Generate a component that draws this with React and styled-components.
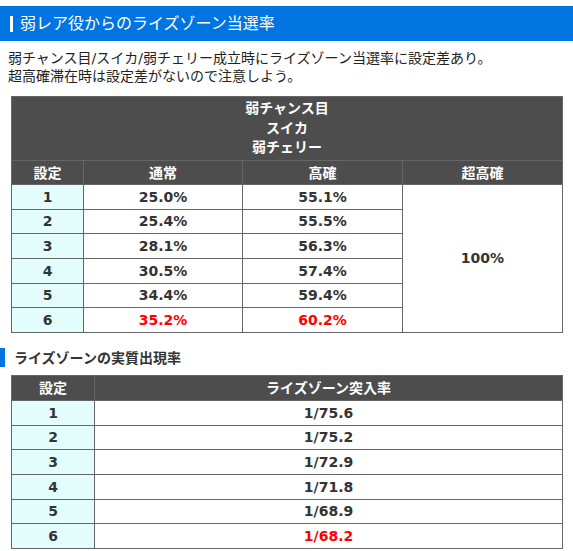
import React from 'react';
import styled, { createGlobalStyle } from "styled-components";

const GlobalStyle = createGlobalStyle`
    body {
        margin: 0;
        background: #fff;
        font-family: "DejaVu Sans", "Noto Sans CJK JP", sans-serif;
        color: #333;
    }
`;

const rareRows = [
    { set: "1", normal: "25.0%", high: "55.1%" },
    { set: "2", normal: "25.4%", high: "55.5%" },
    { set: "3", normal: "28.1%", high: "56.3%" },
    { set: "4", normal: "30.5%", high: "57.4%" },
    { set: "5", normal: "34.4%", high: "59.4%" },
    { set: "6", normal: "35.2%", high: "60.2%", hot: true },
];

const zoneRows = [
    { set: "1", rate: "1/75.6" },
    { set: "2", rate: "1/75.2" },
    { set: "3", rate: "1/72.9" },
    { set: "4", rate: "1/71.8" },
    { set: "5", rate: "1/68.9" },
    { set: "6", rate: "1/68.2", hot: true },
];

function App() {
    return (
        <Page>
            <GlobalStyle />
            <TitleBar>
                <TitleMark />
                <Title>弱レア役からのライズゾーン当選率</Title>
            </TitleBar>

            <Lead>
                弱チャンス目/スイカ/弱チェリー成立時にライズゾーン当選率に設定差あり。<br />
                超高確滞在時は設定差がないので注意しよう。
            </Lead>

            <Table>
                <colgroup>
                    <col style={{ width: 72 }} />
                    <col style={{ width: 159 }} />
                    <col style={{ width: 160 }} />
                    <col />
                </colgroup>
                <thead>
                    <tr>
                        <Th colSpan={4} $tall>
                            弱チャンス目<br />スイカ<br />弱チェリー
                        </Th>
                    </tr>
                    <tr>
                        <Th>設定</Th>
                        <Th>通常</Th>
                        <Th>高確</Th>
                        <Th>超高確</Th>
                    </tr>
                </thead>
                <tbody>
                    {rareRows.map((row, i) => (
                        <tr key={row.set}>
                            <SetCell>{row.set}</SetCell>
                            <Td $hot={row.hot}>{row.normal}</Td>
                            <Td $hot={row.hot}>{row.high}</Td>
                            {i === 0 && <Td rowSpan={6}>100%</Td>}
                        </tr>
                    ))}
                </tbody>
            </Table>

            <SubHeading>ライズゾーンの実質出現率</SubHeading>

            <Table>
                <colgroup>
                    <col style={{ width: 83 }} />
                    <col />
                </colgroup>
                <thead>
                    <tr>
                        <Th $wide>設定</Th>
                        <Th $wide>ライズゾーン突入率</Th>
                    </tr>
                </thead>
                <tbody>
                    {zoneRows.map((row) => (
                        <tr key={row.set}>
                            <SetCell>{row.set}</SetCell>
                            <Td $hot={row.hot}>{row.rate}</Td>
                        </tr>
                    ))}
                </tbody>
            </Table>
        </Page>
    )
}

const Page = styled.div`
    width: 573px;
    padding-top: 6px;
`;

const TitleBar = styled.div`
    display: flex;
    align-items: center;
    gap: 7px;
    height: 35px;
    padding-left: 10px;
    background-color: #0074e0;
`;

const TitleMark = styled.span`
    width: 3px;
    height: 16px;
    background: #fff;
`;

const Title = styled.h1`
    margin: 0;
    font-size: 16px;
    font-weight: normal;
    color: #fff;
    line-height: 20px;
`;

const Lead = styled.p`
    margin: 8px 0 11px 8px;
    font-size: 14px;
    line-height: 18px;
    color: #222;
`;

const Table = styled.table`
    width: 552px;
    margin-left: 11px;
    border-collapse: collapse;
    table-layout: fixed;
    border: 1px solid #666;
    font-size: 14px;
    font-weight: bold;
    text-align: center;
`;

const Th = styled.th`
    background: #4d4d4d;
    color: #fff;
    border: 1px solid #666;
    padding: 0;
    height: ${(p) => (p.$tall ? "63px" : p.$wide ? "24px" : "23px")};
    line-height: ${(p) => (p.$tall ? "19.5px" : "20px")};
    font-size: 14px;
`;

const Td = styled.td`
    border: 1px solid #666;
    padding: 0;
    height: 23.67px;
    line-height: 20px;
    background: #fff;
    color: ${(p) => (p.$hot ? "#ff0000" : "#333")};
`;

const SetCell = styled(Td)`
    background: #e3fdfd;
    color: #333;
`;

const SubHeading = styled.h2`
    display: flex;
    align-items: center;
    margin: 15px 0 8px;
    height: 19px;
    border-left: 5px solid #0074e0;
    box-sizing: border-box;
    padding-left: 9px;
    font-size: 14px;
    font-weight: bold;
    color: #333;
`;

export default App;
